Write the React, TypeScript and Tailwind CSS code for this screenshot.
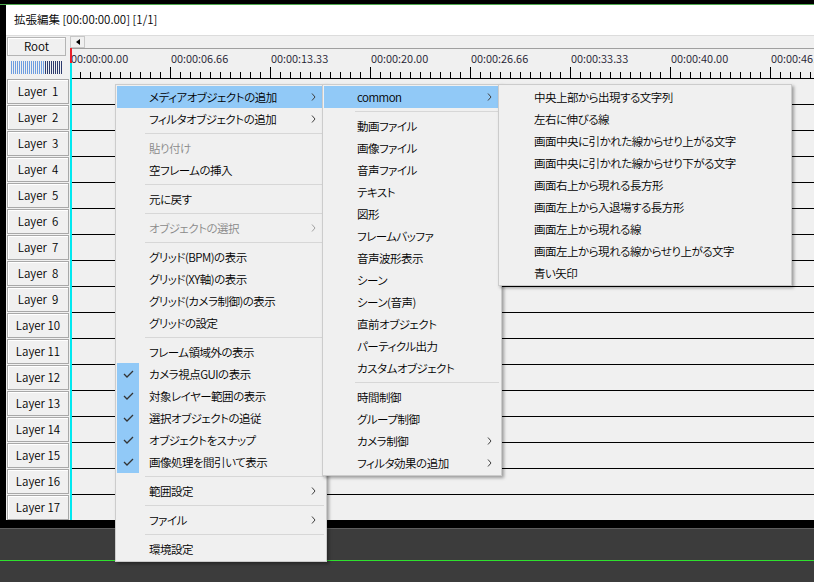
import React from 'react';

type MenuItem = {
  label: string;
  hot?: boolean;
  disabled?: boolean;
  arrow?: boolean;
  checked?: boolean;
};

const SEP = 'sep' as const;
type Entry = MenuItem | typeof SEP;

const mainMenu: Entry[] = [
  { label: 'メディアオブジェクトの追加', hot: true, arrow: true },
  { label: 'フィルタオブジェクトの追加', arrow: true },
  SEP,
  { label: '貼り付け', disabled: true },
  { label: '空フレームの挿入' },
  SEP,
  { label: '元に戻す' },
  SEP,
  { label: 'オブジェクトの選択', disabled: true, arrow: true },
  SEP,
  { label: 'グリッド(BPM)の表示' },
  { label: 'グリッド(XY軸)の表示' },
  { label: 'グリッド(カメラ制御)の表示' },
  { label: 'グリッドの設定' },
  SEP,
  { label: 'フレーム領域外の表示' },
  { label: 'カメラ視点GUIの表示', checked: true },
  { label: '対象レイヤー範囲の表示', checked: true },
  { label: '選択オブジェクトの追従', checked: true },
  { label: 'オブジェクトをスナップ', checked: true },
  { label: '画像処理を間引いて表示', checked: true },
  SEP,
  { label: '範囲設定', arrow: true },
  SEP,
  { label: 'ファイル', arrow: true },
  SEP,
  { label: '環境設定' },
];

const mediaMenu: Entry[] = [
  { label: 'common', hot: true, arrow: true },
  SEP,
  { label: '動画ファイル' },
  { label: '画像ファイル' },
  { label: '音声ファイル' },
  { label: 'テキスト' },
  { label: '図形' },
  { label: 'フレームバッファ' },
  { label: '音声波形表示' },
  { label: 'シーン' },
  { label: 'シーン(音声)' },
  { label: '直前オブジェクト' },
  { label: 'パーティクル出力' },
  { label: 'カスタムオブジェクト' },
  SEP,
  { label: '時間制御' },
  { label: 'グループ制御' },
  { label: 'カメラ制御', arrow: true },
  { label: 'フィルタ効果の追加', arrow: true },
];

const commonMenu: Entry[] = [
  { label: '中央上部から出現する文字列' },
  { label: '左右に伸びる線' },
  { label: '画面中央に引かれた線からせり上がる文字' },
  { label: '画面中央に引かれた線からせり下がる文字' },
  { label: '画面右上から現れる長方形' },
  { label: '画面左上から入退場する長方形' },
  { label: '画面左上から現れる線' },
  { label: '画面左上から現れる線からせり上がる文字' },
  { label: '青い矢印' },
];

const rulerLabels = [
  '00:00:00.00',
  '00:00:06.66',
  '00:00:13.33',
  '00:00:20.00',
  '00:00:26.66',
  '00:00:33.33',
  '00:00:40.00',
  '00:00:46.66',
];

function Check() {
  return (
    <svg width="11" height="8" viewBox="0 0 11 8">
      <path d="M1 4 L4 7 L10 1" fill="none" stroke="#333" strokeWidth="1.3" />
    </svg>
  );
}

function Chevron({ color }: { color: string }) {
  return (
    <svg width="5" height="8" viewBox="0 0 5 8">
      <path d="M1 0.5 L4 4 L1 7.5" fill="none" stroke={color} strokeWidth="1" />
    </svg>
  );
}

function Menu({
  items,
  className,
  textClass,
  sepClass,
  arrowClass,
}: {
  items: Entry[];
  className: string;
  textClass: string;
  sepClass: string;
  arrowClass: string;
}) {
  return (
    <div
      className={`absolute border border-[#cccccc] bg-[#f0f0f0] p-[1px] shadow-[2px_2px_3px_rgba(0,0,0,0.35)] ${className}`}
    >
      {items.map((it, i) =>
        it === SEP ? (
          <div key={i} className={`flex h-[7px] items-center pr-[1px] ${sepClass}`}>
            <div className="h-px w-full bg-[#d7d7d7]" />
          </div>
        ) : (
          <div key={i} className={`flex h-[22px] items-center ${it.hot ? 'bg-[#91c9f7]' : ''}`}>
            <div
              className={`flex h-[22px] w-[22px] shrink-0 items-center justify-center ${it.checked ? 'bg-[#91c9f7]' : ''}`}
            >
              {it.checked && <Check />}
            </div>
            <span
              className={`whitespace-nowrap text-[11.5px] leading-[22px] tracking-[-0.5px] ${textClass} ${it.disabled ? 'text-[#8a8a8a]' : 'text-black'}`}
            >
              {it.label}
            </span>
            {it.arrow && (
              <span className={`ml-auto flex ${arrowClass}`}>
                <Chevron color={it.disabled ? '#a0a0a0' : '#404040'} />
              </span>
            )}
          </div>
        )
      )}
    </div>
  );
}

function Meter() {
  const stripes = Array.from({ length: 26 }, (_, i) => i);
  return (
    <svg width="52" height="13" viewBox="0 0 52 13">
      {stripes.map(i => (
        <rect key={i} x={i * 2} y="0" width="1" height="13" fill={i < 17 ? '#6d9de0' : '#2c3b6e'} />
      ))}
    </svg>
  );
}

function Ticks() {
  const ticks = Array.from({ length: 76 }, (_, i) => i);
  return (
    <svg width="760" height="11" viewBox="0 0 760 11" className="block">
      {ticks.map(i => (
        <line
          key={i}
          x1={i * 10 + 0.5}
          x2={i * 10 + 0.5}
          y1={i % 10 === 0 ? 0 : 5}
          y2="11"
          stroke="#000"
          strokeWidth="1"
        />
      ))}
    </svg>
  );
}

export default function App() {
  const layers = Array.from({ length: 17 }, (_, i) => i + 1);

  return (
    <div className="relative h-[582px] w-[814px] overflow-hidden bg-black font-['Noto_Sans_CJK_JP',sans-serif] text-[11.5px] font-[350] [font-feature-settings:'palt']">
      <div className="h-[4px] bg-black" />
      <div className="h-[1px] bg-[#4fa84f]" />

      <div className="flex h-[515px]">
        <div className="w-[6px] shrink-0 bg-black" />

        {/* editor window */}
        <div className="flex flex-1 flex-col bg-[#f0f0f0]">
          <div className="flex h-[31px] items-center border-b border-[#dcdcdc] bg-white pl-[8px] text-black">
            拡張編集 [00:00:00.00] [1/1]
          </div>

          <div className="flex h-[484px]">
            {/* layer headers */}
            <div className="flex w-[64px] shrink-0 flex-col">
              <div className="h-[42px]">
                <div className="ml-[1px] mt-[1px] flex h-[19px] w-[59px] items-center justify-center border border-[#b4b4b4] bg-[#f0f0f0] text-black shadow-[inset_1px_1px_0_#ffffff]">
                  Root
                </div>
                <div className="ml-[5px] mt-[5px] flex">
                  <Meter />
                </div>
              </div>
              {layers.map(n => (
                <div key={n} className="h-[26px]">
                  <div className="ml-[1px] mt-[1px] flex h-[25px] w-[62px] items-center justify-center whitespace-pre border border-[#a8a8a8] bg-[#f0f0f0] text-black shadow-[inset_1px_1px_0_#ffffff]">
                    {`Layer ${n < 10 ? ' ' : ''}${n}`}
                  </div>
                </div>
              ))}
            </div>

            {/* timeline */}
            <div className="relative flex-1 overflow-hidden">
              <div className="flex h-[13px] border-b border-[#a0a0a0]">
                <div className="flex h-[12px] w-[15px] items-center justify-center border border-[#c8c8c8] bg-[#f0f0f0]">
                  <svg width="4" height="6" viewBox="0 0 4 6">
                    <path d="M4 0 L0 3 L4 6 Z" fill="#000" />
                  </svg>
                </div>
              </div>

              <div className="h-[29px]">
                <div className="flex h-[18px] items-center">
                  {rulerLabels.map(t => (
                    <span key={t} className="w-[100px] shrink-0 pl-[1px] text-[11px] leading-[18px] text-[#1e2030]">
                      {t}
                    </span>
                  ))}
                </div>
                <Ticks />
              </div>

              {layers.map(n => (
                <div key={n} className="h-[26px] border-t border-black" />
              ))}

              {/* current frame cursor */}
              <div className="absolute left-0 top-[12px] h-[15px] w-[2px] bg-[#e8202a]" />
              <div className="absolute bottom-0 left-0 top-[27px] w-[2px] bg-[#00e8f0]" />
            </div>
          </div>
        </div>
      </div>

      <div className="h-[8px] bg-black" />
      <div className="h-[54px] border-t border-[#5e5e5e] bg-[#3c3c3c]">
        <div className="mt-[31px] h-[1px] bg-[#2ee02e]" />
      </div>

      <Menu
        items={mainMenu}
        className="left-[115px] top-[84px] w-[212px]"
        textClass="ml-[10px]"
        sepClass="pl-[28px]"
        arrowClass="mr-[9px]"
      />
      <Menu
        items={mediaMenu}
        className="left-[322px] top-[84px] w-[180px]"
        textClass="ml-[11px]"
        sepClass="pl-[31px]"
        arrowClass="mr-[8px]"
      />
      <Menu
        items={commonMenu}
        className="left-[498px] top-[84px] w-[294px]"
        textClass="ml-[12px]"
        sepClass="pl-[31px]"
        arrowClass="mr-[8px]"
      />
    </div>
  );
}
